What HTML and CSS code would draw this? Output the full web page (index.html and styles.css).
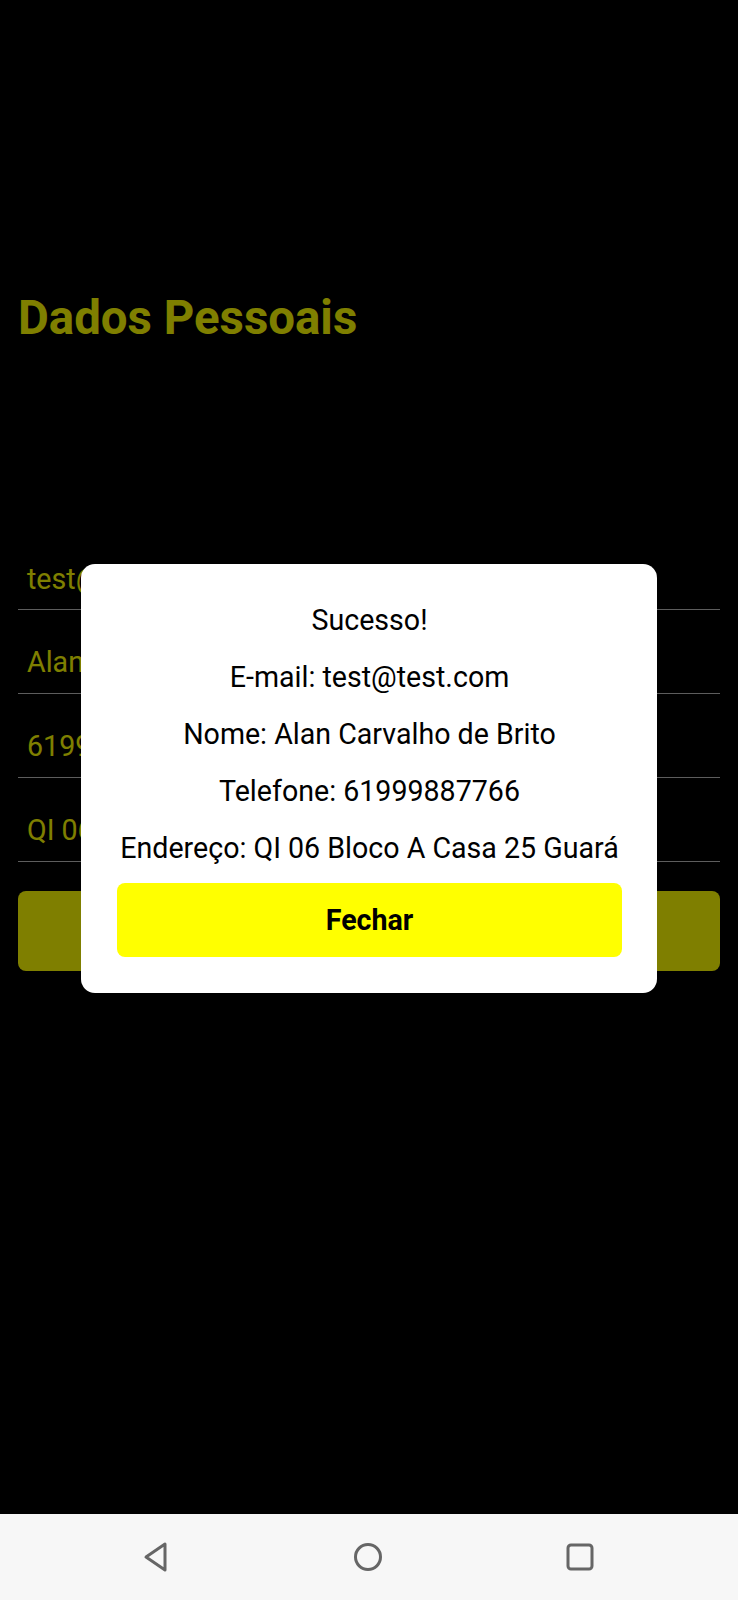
FILE: index.html
```html
<!DOCTYPE html>
<html lang="pt">
<head>
<meta charset="utf-8">
<link rel="stylesheet" href="styles.css">
</head>
<body>
<div class="screen">
  <main class="content">
    <h1 class="title">Dados Pessoais</h1>
    <form class="form">
      <div class="field">test@test.com</div>
      <div class="field">Alan Carvalho de Brito</div>
      <div class="field">61999887766</div>
      <div class="field">QI 06 Bloco A Casa 25 Guará</div>
      <div class="submit">Salvar</div>
    </form>
  </main>
  <div class="overlay">
    <div class="modal">
      <p class="line">Sucesso!</p>
      <p class="line">E-mail: test@test.com</p>
      <p class="line">Nome: Alan Carvalho de Brito</p>
      <p class="line">Telefone: 61999887766</p>
      <p class="line">Endereço: QI 06 Bloco A Casa 25 Guará</p>
      <div class="close">Fechar</div>
    </div>
  </div>
  <nav class="navbar">
    <svg class="nav-icon" width="30" height="32" viewBox="0 0 30 32"><path d="M24 3 L24 29 L5 16 Z" fill="none" stroke="#666" stroke-width="3" stroke-linejoin="round"/></svg>
    <svg class="nav-icon" width="32" height="32" viewBox="0 0 32 32"><circle cx="16" cy="16" r="12.5" fill="none" stroke="#666" stroke-width="3"/></svg>
    <svg class="nav-icon" width="30" height="30" viewBox="0 0 30 30"><rect x="3" y="3" width="24" height="24" rx="3" fill="none" stroke="#666" stroke-width="3"/></svg>
  </nav>
</div>
</body>
</html>
```
FILE: styles.css
```css
html, body {
  margin: 0;
  padding: 0;
  background: #000;
}
body {
  font-family: Roboto, "Noto Sans", Arial, sans-serif;
}
.screen {
  position: relative;
  width: 738px;
  height: 1600px;
  background: #000;
  overflow: hidden;
  display: flex;
  flex-direction: column;
}
.content {
  flex: 1;
  padding: 0 18px;
}
.title {
  margin: 283px 0 0 0;
  font-size: 47.4px;
  font-weight: 700;
  color: #ffff00;
  line-height: 70px;
}
.form {
  margin-top: 174px;
}
.field {
  height: 83px;
  border-bottom: 1px solid #bbbbbb;
  box-sizing: border-box;
  padding: 24px 0 0 9px;
  font-size: 28.6px;
  line-height: 56px;
  color: #ffff00;
  white-space: nowrap;
  overflow: hidden;
}
.field + .field {
  height: 84px;
}
.submit {
  margin-top: 29px;
  height: 80px;
  border-radius: 8px;
  background: #ffff00;
  color: #000;
  font-size: 28px;
  font-weight: 700;
  display: flex;
  align-items: center;
  justify-content: center;
}
.overlay {
  position: absolute;
  left: 0;
  top: 0;
  width: 738px;
  height: 1514px;
  box-sizing: border-box;
  padding-top: 42px;
  background: rgba(0, 0, 0, 0.5);
  display: flex;
  align-items: center;
  justify-content: center;
}
.modal {
  width: 576px;
  box-sizing: border-box;
  background: #fff;
  border-radius: 14px;
  padding: 28px 35px 36px 36px;
  text-align: center;
}
.line {
  margin: 0;
  font-size: 28.6px;
  line-height: 57px;
  color: #000;
  white-space: nowrap;
}
.close {
  margin-top: 6px;
  height: 74px;
  border-radius: 8px;
  background: #ffff00;
  color: #000;
  font-size: 28.6px;
  font-weight: 700;
  display: flex;
  align-items: center;
  justify-content: center;
}
.navbar {
  height: 86px;
  background: #f7f7f7;
  display: flex;
  align-items: center;
  justify-content: space-between;
  padding: 0 143px 0 141px;
  position: relative;
  z-index: 1;
}
```
